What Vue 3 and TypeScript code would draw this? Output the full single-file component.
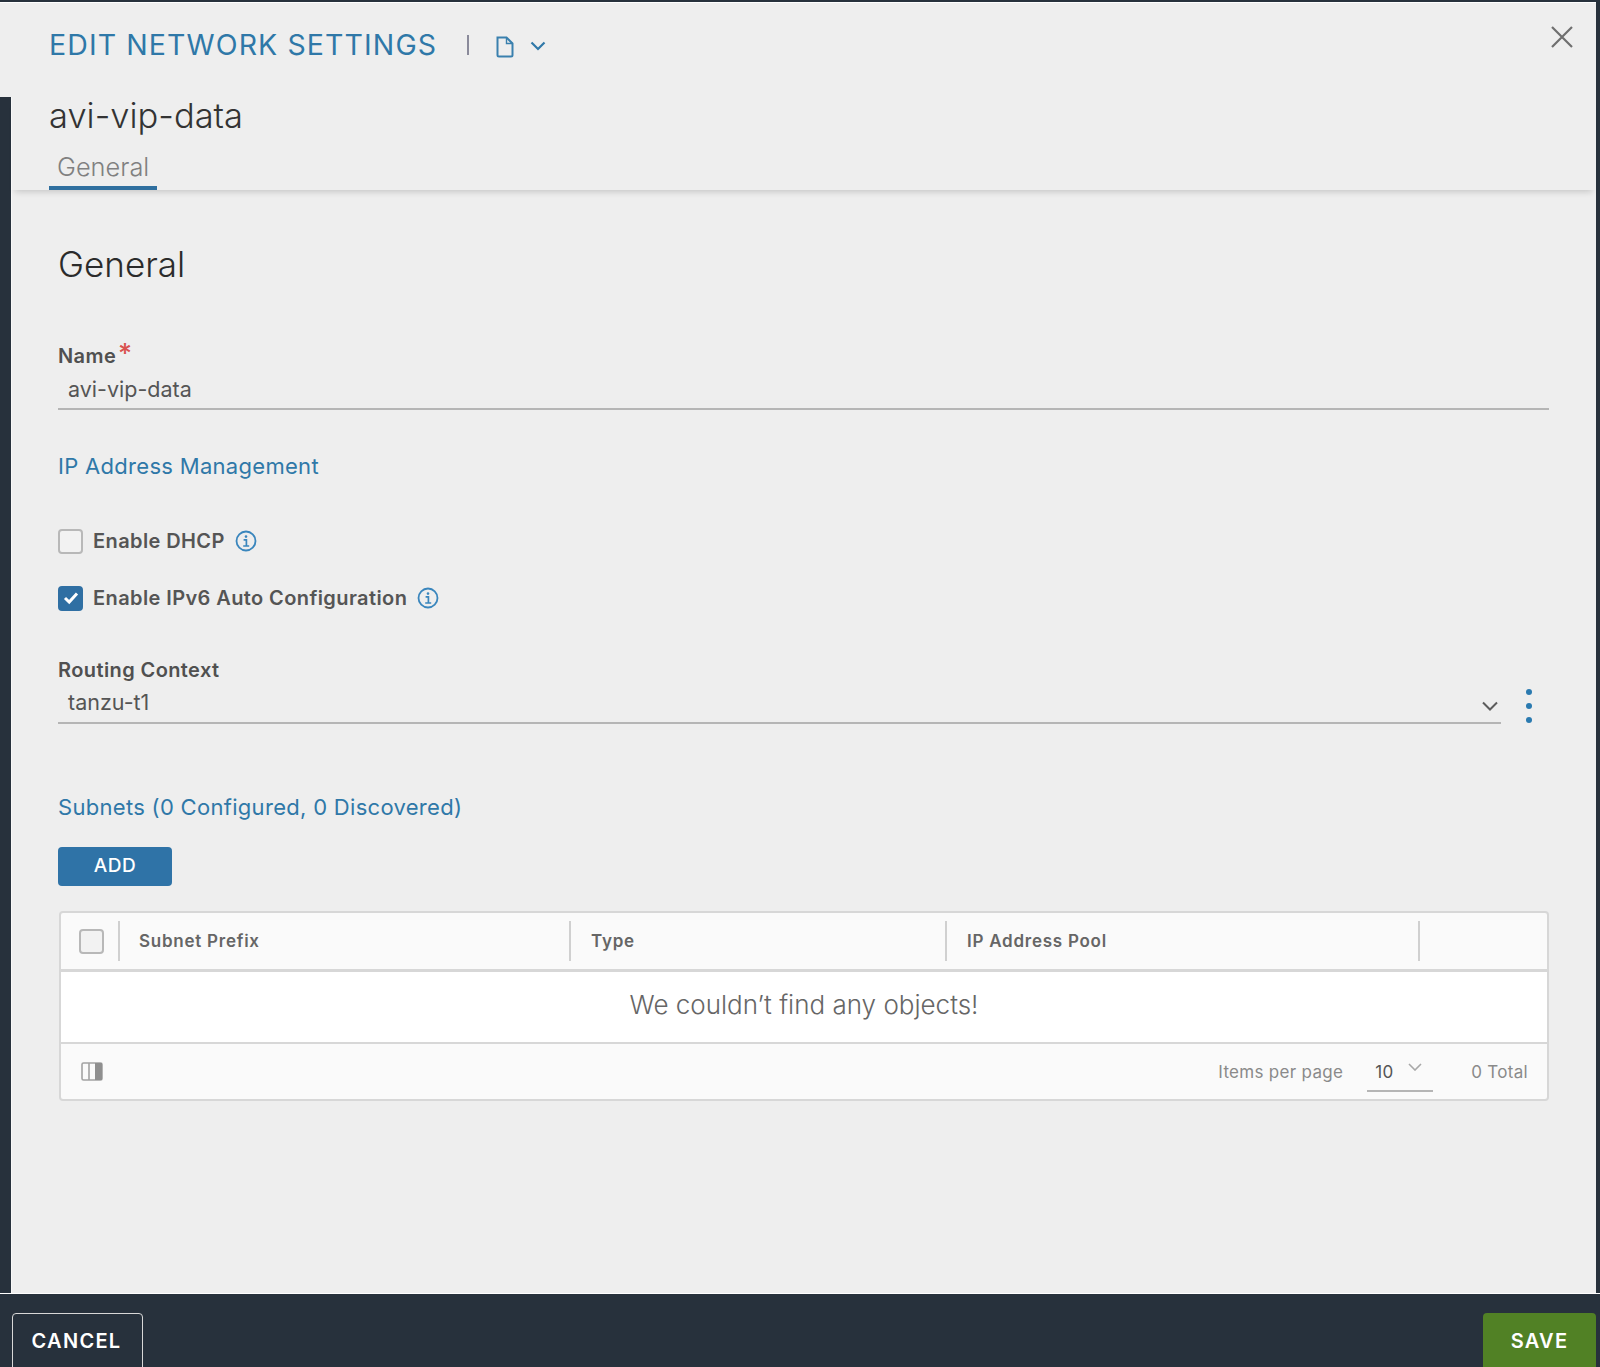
<script setup lang="ts">
const columns = [
  { label: 'Subnet Prefix', width: 451 },
  { label: 'Type', width: 376 },
  { label: 'IP Address Pool', width: 473 },
]
</script>

<template>
  <div class="screen">
    <header class="head">
      <div class="head-top">
        <h1 class="title">EDIT NETWORK SETTINGS</h1>
        <span class="sep"></span>
        <svg class="doc" width="20" height="22" viewBox="0 0 20 22" fill="none" stroke="#3a80ae" stroke-width="2">
          <path d="M2.5 1.5h9l6 6v11.5a1.5 1.5 0 0 1-1.5 1.5h-12a1.5 1.5 0 0 1-1.5-1.5z" />
          <path d="M11.5 1.5v6h6" stroke-width="1.4" />
        </svg>
        <svg class="chev" width="16" height="10" viewBox="0 0 16 10" fill="none" stroke="#2f78a8" stroke-width="2.2">
          <path d="M1.5 1.5 8 8l6.5-6.5" />
        </svg>
        <svg class="close" width="22" height="22" viewBox="0 0 22 22" fill="none" stroke="#6f6f6f" stroke-width="2.2">
          <path d="M1 1l20 20M21 1L1 21" />
        </svg>
      </div>
      <div class="head-sub">
        <div class="object-name">avi-vip-data</div>
        <div class="tab">General</div>
      </div>
    </header>

    <main class="main">
      <h2 class="section">General</h2>

      <label class="label name-label">Name<span class="req">*</span></label>
      <div class="input">avi-vip-data</div>

      <h3 class="sub ip-head">IP Address Management</h3>

      <div class="check-row first">
        <span class="box"></span>
        <span class="check-label">Enable DHCP</span>
        <svg class="info" width="22" height="22" viewBox="0 0 22 22" fill="none" stroke="#3a86bd">
          <circle cx="11" cy="11" r="9.5" stroke-width="1.8" />
          <circle cx="11" cy="6.6" r="1.3" fill="#3a86bd" stroke="none" />
          <path d="M8.6 9.8h2.8v6M8.2 16h6" stroke-width="1.7" />
        </svg>
      </div>
      <div class="check-row second">
        <span class="box on">
          <svg width="16" height="14" viewBox="0 0 16 14" fill="none" stroke="#fff" stroke-width="3">
            <path d="M2 7l4.2 4L14 2.5" />
          </svg>
        </span>
        <span class="check-label">Enable IPv6 Auto Configuration</span>
        <svg class="info" width="22" height="22" viewBox="0 0 22 22" fill="none" stroke="#3a86bd">
          <circle cx="11" cy="11" r="9.5" stroke-width="1.8" />
          <circle cx="11" cy="6.6" r="1.3" fill="#3a86bd" stroke="none" />
          <path d="M8.6 9.8h2.8v6M8.2 16h6" stroke-width="1.7" />
        </svg>
      </div>

      <label class="label routing-label">Routing Context</label>
      <div class="select-row">
        <div class="select">
          <span>tanzu-t1</span>
          <svg width="16" height="10" viewBox="0 0 16 10" fill="none" stroke="#5c5c5c" stroke-width="2">
            <path d="M1 1.5l7 7 7-7" />
          </svg>
        </div>
        <div class="dots"><i></i><i></i><i></i></div>
      </div>

      <h3 class="sub subnets-head">Subnets (0 Configured, 0 Discovered)</h3>

      <button class="add">ADD</button>

      <section class="grid">
        <div class="grid-head">
          <div class="select-cell"><span class="box"></span></div>
          <div v-for="c in columns" :key="c.label" class="col" :style="{ width: c.width + 'px' }">{{ c.label }}</div>
        </div>
        <div class="grid-empty">We couldn’t find any objects!</div>
        <div class="grid-foot">
          <svg width="22" height="19" viewBox="0 0 22 19">
            <rect x="1" y="1" width="20" height="17" rx="1.5" fill="#fafafa" stroke="#a3a3a3" stroke-width="1.6" />
            <rect x="7.2" y="1" width="1.6" height="17" fill="#a3a3a3" />
            <rect x="14" y="1" width="7" height="17" fill="#8f8f8f" />
          </svg>
          <span class="per">Items per page</span>
          <div class="page-size">
            <span>10</span>
            <svg width="14" height="8" viewBox="0 0 14 8" fill="none" stroke="#a8a8a8" stroke-width="1.6">
              <path d="M1 1l6 6 6-6" />
            </svg>
          </div>
          <span class="total">0 Total</span>
        </div>
      </section>
    </main>

    <footer class="foot">
      <button class="cancel">CANCEL</button>
      <button class="save">SAVE</button>
    </footer>
  </div>
</template>

<style scoped>
.screen {
  width: 1600px;
  height: 1367px;
  overflow: hidden;
  display: flex;
  flex-direction: column;
  background: #27313c;
  font-family: Inter, "Liberation Sans", sans-serif;
  color: #444;
  padding-top: 2px;
  box-sizing: border-box;
}
.head {
  position: relative;
  z-index: 1;
  width: 1596px;
  flex: none;
}
.head-top {
  height: 95px;
  background: #eee;
  border-top: 1px solid #fff;
  box-sizing: border-box;
  display: flex;
  align-items: flex-start;
  padding-left: 49px;
  padding-right: 23px;
}
.title {
  margin: 24px 0 0;
  font-size: 28.5px;
  line-height: 36px;
  font-weight: 400;
  letter-spacing: 1.1px;
  color: #2f78a8;
  white-space: nowrap;
}
.sep {
  width: 2px;
  height: 20px;
  background: #8a8a9a;
  margin: 32px 0 0 30px;
}
.doc { margin: 33px 0 0 26px; }
.chev { margin: 38px 0 0 15px; }
.close { margin: 23px 0 0 auto; }
.head-sub {
  height: 93px;
  margin-left: 11px;
  background: #eee;
  border-left: 1px solid #f8f8f8;
  box-shadow: 0 6px 6px -4px rgba(0, 0, 0, 0.16);
  padding: 1px 0 0 37px;
  box-sizing: border-box;
}
.object-name {
  height: 36px;
  font-size: 34.5px;
  line-height: 36px;
  color: #333;
  font-weight: 300;
}
.tab {
  width: 108px;
  box-sizing: border-box;
  height: 37px;
  padding-left: 8px;
  margin-top: 19px;
  font-size: 25.4px;
  line-height: 28px;
  font-weight: 300;
  color: #808080;
  border-bottom: 4px solid #2f6f9f;
}
.main {
  flex: 1;
  margin-left: 11px;
  width: 1585px;
  box-sizing: border-box;
  background: #eee;
  border-left: 1px solid #f8f8f8;
  padding: 54px 46px 0;
  display: flex;
  flex-direction: column;
  align-items: flex-start;
}
.section {
  margin: 0;
  font-size: 35px;
  line-height: 40px;
  font-weight: 300;
  color: #2b2b2b;
}
.label {
  font-size: 20px;
  line-height: 24px;
  font-weight: 600;
  letter-spacing: 0.4px;
  color: #505050;
}
.name-label { margin-top: 60px; position: relative; }
.req {
  color: #d9534f;
  position: absolute;
  left: 100%;
  top: -2px;
  font-size: 27px;
  font-weight: 500;
  margin-left: 2px;
}
.input {
  margin-top: 5px;
  width: 1491px;
  height: 37px;
  box-sizing: border-box;
  padding-left: 10px;
  font-size: 21.5px;
  line-height: 32px;
  font-weight: 400;
  color: #555;
  border-bottom: 2px solid #b5b5b5;
}
.sub {
  margin: 0;
  font-size: 22px;
  line-height: 28px;
  font-weight: 400;
  letter-spacing: 0.3px;
  color: #2f78a8;
}
.ip-head { margin-top: 42px; }
.check-row {
  display: flex;
  align-items: center;
  height: 26px;
}
.check-row.first { margin-top: 48px; }
.check-row.second { margin-top: 31px; }
.box {
  width: 25px;
  height: 25px;
  box-sizing: border-box;
  border: 2px solid #b8b8b8;
  border-radius: 4px;
  display: flex;
  align-items: center;
  justify-content: center;
  background: #f2f2f2;
  flex: none;
}
.box.on {
  background: #2f6fa3;
  border-color: #2f6fa3;
}
.check-label {
  margin-left: 10px;
  font-size: 20px;
  font-weight: 600;
  letter-spacing: 0.4px;
  color: #555;
  white-space: nowrap;
}
.info { margin-left: 10px; }
.routing-label { margin-top: 47px; }
.select-row {
  display: flex;
  align-items: flex-start;
}
.select {
  width: 1443px;
  height: 42px;
  box-sizing: border-box;
  padding: 0 3px 0 10px;
  border-bottom: 2px solid #b5b5b5;
  display: flex;
  align-items: center;
  justify-content: space-between;
  font-size: 21.5px;
  line-height: 40px;
  color: #555;
}
.select svg { margin-top: 8px; }
.dots {
  margin: 7px 0 0 25px;
  display: flex;
  flex-direction: column;
  gap: 8px;
}
.dots i {
  display: block;
  width: 6px;
  height: 6px;
  border-radius: 50%;
  background: #2a7ab0;
}
.subnets-head { margin-top: 69px; }
.add {
  margin-top: 26px;
  width: 114px;
  height: 39px;
  border: 0;
  border-radius: 4px;
  background: #2f73a7;
  color: #fff;
  font-family: inherit;
  font-size: 19px;
  font-weight: 500;
  letter-spacing: 0.5px;
  padding: 0 0 3px;
}
.grid {
  margin: 25px 0 0 1px;
  width: 1490px;
  height: 190px;
  box-sizing: border-box;
  border: 2px solid #d7d7d7;
  border-radius: 4px;
  display: flex;
  flex-direction: column;
  background: #fafafa;
}
.grid-head {
  flex: none;
  display: flex;
  align-items: center;
  border-bottom: 3px solid #d7d7d7;
  height: 56px;
}
.select-cell {
  width: 59px;
  height: 40px;
  flex: none;
  box-sizing: border-box;
  padding-left: 18px;
  display: flex;
  align-items: center;
  border-right: 2px solid #d0d0d0;
}
.col {
  height: 40px;
  box-sizing: border-box;
  padding-left: 20px;
  line-height: 41px;
  font-size: 17px;
  font-weight: 600;
  letter-spacing: 0.75px;
  color: #666;
  border-right: 2px solid #d0d0d0;
  flex: none;
}
.select-cell + .col { padding-left: 19px; }
.grid-empty {
  flex: none;
  height: 70px;
  background: #fff;
  text-align: center;
  font-size: 26px;
  line-height: 66px;
  font-weight: 300;
  color: #666;
  border-bottom: 2px solid #d7d7d7;
}
.grid-foot {
  flex: 1;
  display: flex;
  align-items: center;
  padding: 0 19px 0 20px;
  font-size: 17px;
  letter-spacing: 0.3px;
  color: #8a8a8a;
}
.per { margin-left: auto; font-weight: 400; }
.page-size {
  margin-left: 24px;
  width: 66px;
  height: 38px;
  box-sizing: border-box;
  border-bottom: 2px solid #b5b5b5;
  padding-left: 8px;
  margin-top: 2px;
  display: flex;
  align-items: flex-start;
  gap: 15px;
  line-height: 36px;
  color: #555;
}
.page-size svg { margin-top: 9px; }
.total { margin-left: 38px; }
.foot {
  height: 74px;
  flex: none;
  box-sizing: border-box;
  border-top: 1px solid #fff;
  display: flex;
  justify-content: space-between;
  align-items: flex-start;
  padding: 19px 4px 0 12px;
}
.cancel, .save {
  height: 70px;
  flex: none;
  box-sizing: border-box;
  border-radius: 4px;
  font-family: inherit;
  font-size: 20px;
  font-weight: 600;
  letter-spacing: 1.3px;
  color: #fff;
  padding: 0 0 14px;
}
.cancel {
  width: 131px;
  background: transparent;
  border: 1px solid #d8d8d8;
  padding-right: 2px;
}
.save {
  width: 113px;
  background: #518125;
  border: 0;
}
</style>

<style>
html, body { background: #27313c; }
</style>
